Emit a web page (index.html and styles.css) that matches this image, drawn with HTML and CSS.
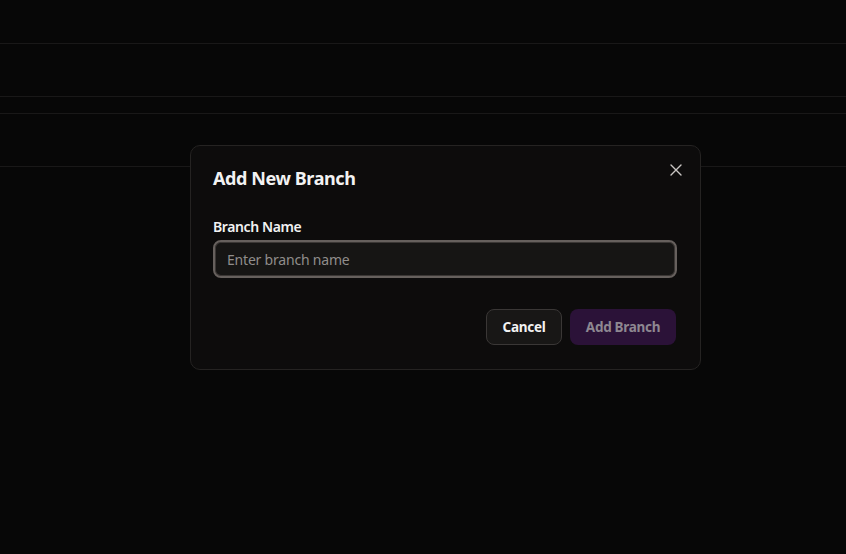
FILE: index.html
```html
<!DOCTYPE html>
<html lang="en">
    <head>
        <meta charset="UTF-8">
        <title>Branches</title>
        <link rel="stylesheet" href="styles.css">
    </head>
    <body>
        <div class="pagina">
            <div class="topo"></div>
            <div class="linha"></div>
            <div class="espaco"></div>
            <div class="linha"></div>
        </div>

        <div class="overlay">
            <div class="dialog">
                <h2 class="titulo">Add New Branch</h2>
                <button class="fechar" type="button" aria-label="Close">
                    <svg width="12" height="12" viewBox="0 0 12 12">
                        <path d="M1 1 L11 11 M11 1 L1 11" stroke="#c9c6c4" stroke-width="1.4" stroke-linecap="round"/>
                    </svg>
                </button>
                <form class="form">
                    <label for="branch">Branch Name</label>
                    <input type="text" id="branch" placeholder="Enter branch name" autofocus>
                    <div class="botoes">
                        <button class="cancelar" type="button">Cancel</button>
                        <button class="adicionar" type="submit" disabled>Add Branch</button>
                    </div>
                </form>
            </div>
        </div>
    </body>
</html>
```

FILE: styles.css
```css
body{
    margin: 0;
    background: #070707;
    font-family: "Noto Sans", "Open Sans", sans-serif;
    color: #f2f2f2;
}
.topo{
    height: 43px;
    border-bottom: 1px solid #191818;
}
.linha{
    height: 52px;
    border-bottom: 1px solid #191818;
}
.espaco{
    height: 16px;
    border-bottom: 1px solid #191818;
}
.overlay{
    position: fixed;
    inset: 0;
    padding: 145px 0 0 190px;
}
.dialog{
    position: relative;
    width: 511px;
    box-sizing: border-box;
    padding: 17px 23px 24px 22px;
    background: #0d0c0c;
    border: 1px solid #252322;
    border-radius: 10px;
}
.titulo{
    margin: 0;
    font-size: 18px;
    line-height: 30px;
    font-weight: 700;
    letter-spacing: -0.4px;
}
.fechar{
    position: absolute;
    top: 14px;
    right: 14px;
    width: 20px;
    height: 20px;
    padding: 0;
    border: 0;
    background: none;
    display: flex;
    align-items: center;
    justify-content: center;
    cursor: pointer;
}
.form{
    margin-top: 24px;
}
.form label{
    display: block;
    font-size: 14px;
    line-height: 20px;
    font-weight: 600;
    letter-spacing: -0.4px;
}
.form input{
    display: block;
    width: 100%;
    height: 38px;
    box-sizing: border-box;
    margin-top: 3px;
    padding: 0 12px;
    background: #161514;
    border: 2px solid #66605d;
    box-shadow: inset 0 0 0 1px #3b3735;
    border-radius: 8px;
    color: #f2f2f2;
    font-family: inherit;
    font-size: 14px;
    letter-spacing: -0.2px;
    outline: none;
    caret-color: #f2f2f2;
}
.form input::placeholder{
    color: #908d8b;
}
.botoes{
    display: flex;
    justify-content: flex-end;
    gap: 8px;
    margin-top: 31px;
    padding-right: 1px;
}
.botoes button{
    height: 36px;
    padding: 0;
    border-radius: 8px;
    font-family: inherit;
    font-size: 13.5px;
    font-weight: 700;
    letter-spacing: -0.3px;
}
.cancelar{
    width: 76px;
    background: #181716;
    border: 1px solid #3a3736;
    color: #f2f2f2;
    cursor: pointer;
}
.adicionar{
    width: 106px;
    background: #2b1238;
    border: 0;
    color: #8e8791;
}
```
